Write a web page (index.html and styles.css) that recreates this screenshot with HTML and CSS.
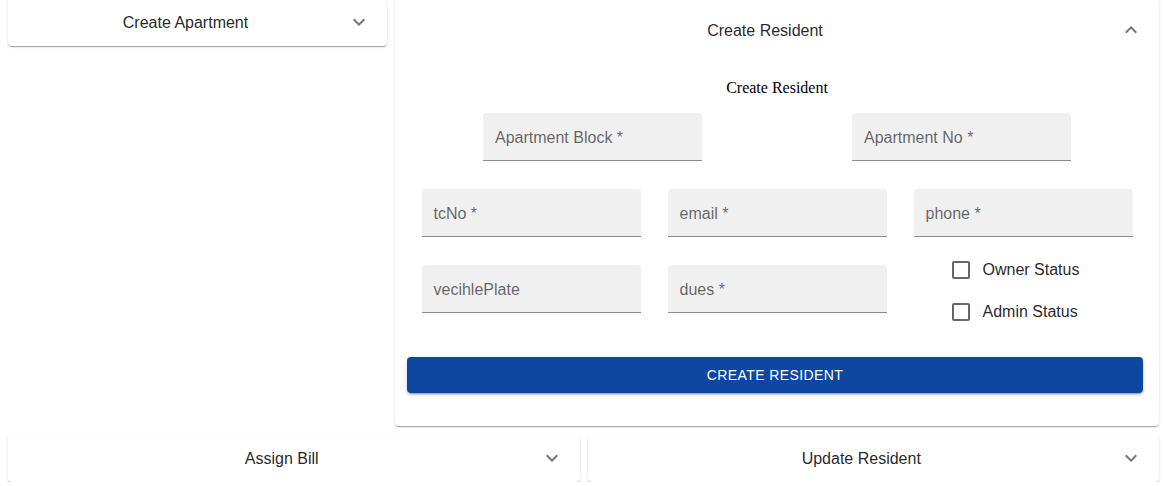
FILE: index.html
```html
<!DOCTYPE html>
<html lang="en">
<head>
<meta charset="utf-8">
<title>Residents</title>
<link rel="stylesheet" href="styles.css">
</head>
<body>
<div class="page">
  <div class="row row-top">
    <section class="acc">
      <div class="summary">
        <div class="sum-title">Create Apartment</div>
        <svg class="chev" viewBox="0 0 24 24" width="24" height="24"><path d="M16.59 8.59 12 13.17 7.41 8.59 6 10l6 6 6-6z"/></svg>
      </div>
    </section>
    <section class="acc">
      <div class="summary expanded">
        <div class="sum-title">Create Resident</div>
        <svg class="chev up" viewBox="0 0 24 24" width="24" height="24"><path d="M16.59 8.59 12 13.17 7.41 8.59 6 10l6 6 6-6z"/></svg>
      </div>
      <div class="details">
        <div class="form-title">Create Resident</div>
        <div class="field-row row-two">
          <div class="field"><span class="label">Apartment Block *</span></div>
          <div class="field"><span class="label">Apartment No *</span></div>
        </div>
        <div class="field-row row-three">
          <div class="field"><span class="label">tcNo *</span></div>
          <div class="field"><span class="label">email *</span></div>
          <div class="field"><span class="label">phone *</span></div>
        </div>
        <div class="field-row row-three">
          <div class="field"><span class="label">vecihlePlate</span></div>
          <div class="field"><span class="label">dues *</span></div>
          <div class="checks">
            <label class="check"><span class="box"></span><span class="check-text">Owner Status</span></label>
            <label class="check"><span class="box"></span><span class="check-text">Admin Status</span></label>
          </div>
        </div>
        <button class="submit" type="button">Create Resident</button>
      </div>
    </section>
  </div>
  <div class="row row-bottom">
    <section class="acc">
      <div class="summary">
        <div class="sum-title">Assign Bill</div>
        <svg class="chev" viewBox="0 0 24 24" width="24" height="24"><path d="M16.59 8.59 12 13.17 7.41 8.59 6 10l6 6 6-6z"/></svg>
      </div>
    </section>
    <section class="acc">
      <div class="summary">
        <div class="sum-title">Update Resident</div>
        <svg class="chev" viewBox="0 0 24 24" width="24" height="24"><path d="M16.59 8.59 12 13.17 7.41 8.59 6 10l6 6 6-6z"/></svg>
      </div>
    </section>
  </div>
</div>
</body>
</html>
```

FILE: styles.css
```css
html, body {
  margin: 0;
  padding: 0;
  background: #fff;
}

body {
  font-family: "Liberation Sans", Arial, sans-serif;
  font-size: 16px;
  color: rgba(0, 0, 0, 0.87);
}

.page {
  margin-top: -2px;
  padding: 0 4px 0 8px;
  display: flex;
  flex-direction: column;
  gap: 8px;
}

.row {
  display: grid;
  gap: 8px;
  align-items: start;
}

.row-top {
  grid-template-columns: 379fr 764fr;
}

.row-bottom {
  grid-template-columns: 1fr 1fr;
}

.acc {
  background: #fff;
  border-radius: 4px;
  box-shadow: 0 2px 1px -1px rgba(0, 0, 0, 0.2), 0 1px 1px 0 rgba(0, 0, 0, 0.14), 0 1px 3px 0 rgba(0, 0, 0, 0.12);
}

.summary {
  display: flex;
  align-items: center;
  height: 48px;
  padding: 0 16px;
}

.summary.expanded {
  height: 64px;
}

.sum-title {
  flex: 1;
  text-align: center;
  line-height: 24px;
  padding-top: 2px;
}

.chev {
  display: block;
  fill: rgba(0, 0, 0, 0.54);
}

.chev.up {
  transform: rotate(180deg);
}

.details {
  padding: 8px 16px 16px;
}

.form-title {
  font-family: "Liberation Serif", "Times New Roman", serif;
  font-size: 16px;
  line-height: 20px;
  color: #000;
  text-align: center;
  margin: 8px 0 15px;
}

.field-row {
  display: flex;
  justify-content: center;
  margin-bottom: 28px;
}

.row-two {
  gap: 150px;
}

.row-three {
  gap: 27px;
}

.field-row:last-of-type {
  margin-bottom: 0;
}

.field {
  box-sizing: border-box;
  width: 219px;
  height: 48px;
  background: #f0f0f0;
  border-radius: 4px 4px 0 0;
  border-bottom: 1px solid rgba(0, 0, 0, 0.42);
  padding-left: 12px;
  line-height: 49px;
  overflow: hidden;
}

.label {
  color: rgba(0, 0, 0, 0.6);
}

.checks {
  box-sizing: border-box;
  width: 219px;
  padding: 3px 0 0 38px;
  margin: -19px 0 -20px;
  display: flex;
  flex-direction: column;
}

.check {
  display: flex;
  align-items: center;
  height: 42px;
  gap: 13px;
}

.box {
  box-sizing: border-box;
  width: 18px;
  height: 18px;
  border: 2px solid rgba(0, 0, 0, 0.6);
  border-radius: 2px;
}

.check-text {
  color: rgba(0, 0, 0, 0.87);
}

.submit {
  display: block;
  box-sizing: border-box;
  width: calc(100% + 4px);
  height: 36px;
  margin: 44px 0 17px -4px;
  border: none;
  border-radius: 4px;
  background: #0d47a1;
  color: #fff;
  font-family: "Liberation Sans", Arial, sans-serif;
  font-size: 14px;
  letter-spacing: 0.4px;
  text-transform: uppercase;
  box-shadow: 0 3px 1px -2px rgba(0, 0, 0, 0.2), 0 2px 2px 0 rgba(0, 0, 0, 0.14), 0 1px 5px 0 rgba(0, 0, 0, 0.12);
}
```
